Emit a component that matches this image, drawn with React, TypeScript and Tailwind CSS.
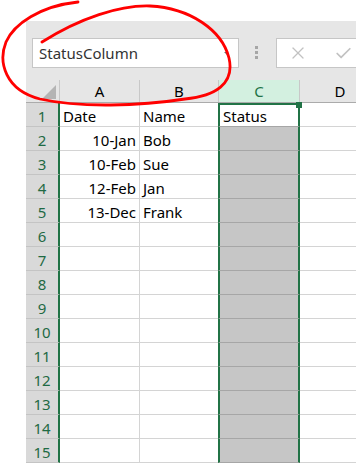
import { X, Check } from "lucide-react";

const ROWS: { n: number; date?: string; name?: string }[] = [
  { n: 1, date: "Date", name: "Name" },
  { n: 2, date: "10-Jan", name: "Bob" },
  { n: 3, date: "10-Feb", name: "Sue" },
  { n: 4, date: "12-Feb", name: "Jan" },
  { n: 5, date: "13-Dec", name: "Frank" },
  ...Array.from({ length: 10 }, (_, i) => ({ n: i + 6 })),
];

function RowLine({ n, date, name }: { n: number; date?: string; name?: string }) {
  const isHeader = n === 1;
  return (
    <div className="flex h-[24px] shrink-0">
      <div className="w-[34px] shrink-0 flex items-center justify-center pt-[3px] bg-[#d9d9d9] border-b border-[#c4c4c4] border-r-2 border-r-[#217346] text-[#1f6a44]">
        {n}
      </div>
      <div
        className={`w-[80px] shrink-0 flex items-center pt-[3px] px-[3px] border-r border-b border-[#d4d4d4] ${
          isHeader ? "justify-start" : "justify-end"
        }`}
      >
        {date}
      </div>
      <div className="w-[78px] shrink-0 flex items-center pt-[3px] px-[3px] border-b border-[#d4d4d4]">
        {name}
      </div>
      {isHeader ? (
        <div className="relative w-[82px] shrink-0 flex items-center pt-[1px] px-[3px] bg-white border-x-2 border-t-2 border-[#217346] border-b border-b-[#a6a6a6]">
          Status
          <span className="absolute -top-[3px] -right-[4px] w-[6px] h-[6px] bg-[#217346]" />
        </div>
      ) : (
        <div className="w-[82px] shrink-0 bg-[#c6c6c6] border-x-2 border-[#217346] border-b border-b-[#a6a6a6]" />
      )}
      <div className="w-[80px] shrink-0 border-r border-b border-[#d4d4d4]" />
    </div>
  );
}

export default function App() {
  return (
    <div className="relative w-[356px] h-[468px] overflow-hidden bg-white text-[15px] text-black font-['Noto_Sans',sans-serif]">
      <div className="ml-[26px] mt-[21px] flex flex-col overflow-hidden">
        {/* name box + formula bar */}
        <div className="h-[59px] shrink-0 bg-[#e6e6e6] flex items-start pt-[17px] pl-[6px]">
          <div className="w-[207px] h-[30px] shrink-0 bg-white border border-[#c6c6c6] flex items-center pl-[6px] pr-[10px]">
            <span className="text-[#333]">StatusColumn</span>
            <span className="ml-auto mt-[2px] w-0 h-0 border-l-[4px] border-l-transparent border-t-[4px] border-t-[#6a6a6a]" />
          </div>
          <div className="ml-[16px] mt-[8px] flex flex-col gap-[2px]">
            <span className="w-[3px] h-[3px] bg-[#a6a6a6]" />
            <span className="w-[3px] h-[3px] bg-[#a6a6a6]" />
            <span className="w-[3px] h-[3px] bg-[#a6a6a6]" />
          </div>
          <div className="ml-[18px] h-[30px] w-[120px] shrink-0 bg-white border border-[#c6c6c6] flex items-center pl-[11px] gap-[26px]">
            <X className="w-[20px] h-[20px] text-[#c2c2c2]" strokeWidth={1.5} />
            <Check className="w-[19px] h-[19px] text-[#c2c2c2]" strokeWidth={2.2} />
          </div>
        </div>

        {/* column headers */}
        <div className="flex h-[23px] shrink-0 bg-[#e6e6e6] border-b border-[#ababab]">
          <div className="w-[34px] shrink-0 relative border-r border-[#c8c8c8]">
            <span className="absolute right-[3px] bottom-[3px] w-0 h-0 border-l-[14px] border-l-transparent border-b-[14px] border-b-[#b4b4b4]" />
          </div>
          <div className="w-[80px] shrink-0 flex items-center justify-center pt-[1px] border-r border-[#c8c8c8]">A</div>
          <div className="w-[79px] shrink-0 flex items-center justify-center pt-[1px] border-r border-[#c8c8c8]">B</div>
          <div className="w-[81px] shrink-0 flex items-center justify-center pt-[1px] bg-[#d3f0e0] text-[#217346] border-r border-[#c8c8c8]">
            C
          </div>
          <div className="w-[80px] shrink-0 flex items-center justify-center pt-[1px]">D</div>
        </div>

        {ROWS.map((r) => (
          <RowLine key={r.n} {...r} />
        ))}
      </div>

      <svg
        className="absolute left-0 top-0 pointer-events-none"
        width="356"
        height="468"
        viewBox="0 0 356 468"
        fill="none"
      >
        <path
          d="M42 42 C 80 18 120 5 150 6 C 190 8 222 30 229 58 C 235 84 215 96 185 99 C 140 106 80 108 40 99 C 5 90 -2 62 6 42 C 14 24 40 6 78 2"
          stroke="#ff0000"
          strokeWidth="2.8"
          strokeLinecap="round"
        />
      </svg>
    </div>
  );
}
